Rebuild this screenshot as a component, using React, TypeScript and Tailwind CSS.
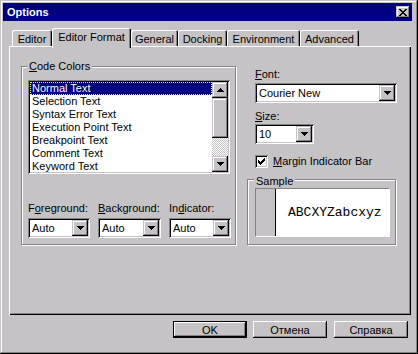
import React from 'react'

const raised =
  'shadow-[inset_-1px_-1px_#000,inset_1px_1px_#c6c3c6,inset_-2px_-2px_#848284,inset_2px_2px_#fff]'
const sunken =
  'shadow-[inset_1px_1px_#848284,inset_-1px_-1px_#fff,inset_2px_2px_#000,inset_-2px_-2px_#c6c3c6]'
const etched = 'border border-[#848284] shadow-[inset_1px_1px_#fff,1px_1px_#fff]'

function DownArrow() {
  return (
    <svg width="7" height="4" viewBox="0 0 7 4" shapeRendering="crispEdges">
      <path d="M0 0H7V1H6V2H5V3H4V4H3V3H2V2H1V1H0Z" fill="#000" />
    </svg>
  )
}

function UpArrow() {
  return (
    <svg width="7" height="4" viewBox="0 0 7 4" shapeRendering="crispEdges">
      <path d="M3 0H4V1H5V2H6V3H7V4H0V3H1V2H2V1H3Z" fill="#000" />
    </svg>
  )
}

function CloseGlyph() {
  const rows = [0, 1, 2, 3, 4, 5, 6]
  const rects: React.ReactNode[] = []
  rows.forEach((r) => {
    const d = r <= 3 ? r : 6 - r
    rects.push(<rect key={`a${r}`} x={d} y={r} width="2" height="1" />)
    rects.push(<rect key={`b${r}`} x={6 - d} y={r} width="2" height="1" />)
  })
  return (
    <svg width="8" height="7" viewBox="0 0 8 7" shapeRendering="crispEdges" fill="#000">
      {rects}
    </svg>
  )
}

function Check() {
  const tops = [2, 3, 4, 3, 2, 1, 0]
  return (
    <svg width="7" height="7" viewBox="0 0 7 7" shapeRendering="crispEdges" fill="#000">
      {tops.map((t, i) => (
        <rect key={i} x={i} y={t} width="1" height="3" />
      ))}
    </svg>
  )
}

function Combo({ value, width }: { value: string; width: string }) {
  return (
    <div className={`flex h-[20px] p-[2px] bg-white ${sunken} ${width}`}>
      <div className="flex-1 pl-[2px] leading-[16px] text-black">{value}</div>
      <div className={`w-[16px] h-[16px] bg-[#c6c3c6] flex items-center justify-center ${raised}`}>
        <DownArrow />
      </div>
    </div>
  )
}

const CODE_COLORS = [
  'Normal Text',
  'Selection Text',
  'Syntax Error Text',
  'Execution Point Text',
  'Breakpoint Text',
  'Comment Text',
  'Keyword Text',
]

const TABS = [
  { label: 'Editor', w: 'w-[40px]' },
  { label: 'Editor Format', w: 'w-[79px]', active: true },
  { label: 'General', w: 'w-[47px]' },
  { label: 'Docking', w: 'w-[49px]' },
  { label: 'Environment', w: 'w-[73px]' },
  { label: 'Advanced', w: 'w-[59px]' },
]

function Button({ children, primary }: { children: React.ReactNode; primary?: boolean }) {
  if (primary) {
    return (
      <div className="w-[74px] h-[17px] border border-black">
        <div className="h-full flex items-center justify-center pt-[1px] shadow-[inset_-1px_-1px_#000,inset_1px_1px_#fff,inset_-2px_-2px_#848284]">
          {children}
        </div>
      </div>
    )
  }
  return (
    <div className="w-[74px] h-[17px] flex items-center justify-center pt-[1px] shadow-[inset_-1px_-1px_#000,inset_1px_1px_#fff,inset_-2px_-2px_#848284]">
      {children}
    </div>
  )
}

export default function App() {
  return (
    <div
      className={`w-[418px] h-[354px] bg-[#c6c3c6] pt-[3px] pl-[3px] pr-[6px] flex flex-col text-[11px] leading-[13px] text-black font-['Liberation_Sans',Arial,sans-serif] ${raised}`}
    >
      {/* title bar */}
      <div className="h-[18px] bg-[#000080] flex items-center justify-between pl-[4px] pr-[2px]">
        <span className="text-white font-bold text-[11px]">Options</span>
        <div className={`w-[14px] h-[12px] bg-[#c6c3c6] flex items-center justify-center ${raised}`}>
          <CloseGlyph />
        </div>
      </div>

      {/* tabs */}
      <div className="relative z-10 mt-[7px] ml-[9px] h-[20px] -mb-[2px] flex items-end">
        {TABS.map((t) =>
          t.active ? (
            <div
              key={t.label}
              className={`${t.w} h-[20px] bg-[#c6c3c6] rounded-t-[2px] flex justify-center pt-[3px] shadow-[inset_1px_1px_#fff,inset_-1px_0_#000,inset_-2px_0_#848284]`}
            >
              {t.label}
            </div>
          ) : (
            <div
              key={t.label}
              className={`${t.w} h-[16px] mb-[2px] rounded-t-[2px] flex justify-center pt-[3px] shadow-[inset_1px_1px_#fff,inset_-1px_0_#000,inset_-2px_0_#848284]`}
            >
              {t.label}
            </div>
          )
        )}
      </div>

      {/* tab panel */}
      <div className="ml-[6px] mr-[1px] h-[269px] pl-[12px] pt-[14px] flex items-start shadow-[inset_1px_1px_#fff,inset_-1px_-1px_#000,inset_-2px_-2px_#848284]">
        {/* Code Colors group */}
        <div className={`mt-[6px] w-[215px] h-[179px] ${etched}`}>
          <div className="-mt-[7px] ml-[5px] px-[2px] w-fit bg-[#c6c3c6]">
            <u>C</u>ode Colors
          </div>
          <div className={`mt-[7px] ml-[6px] w-[202px] h-[94px] bg-white p-[2px] flex ${sunken}`}>
            <div className="flex-1">
              {CODE_COLORS.map((c, i) => (
                <div
                  key={c}
                  className={
                    i === 0
                      ? 'h-[13px] pl-[2px] bg-[#000080] text-white outline-1 outline-dotted outline-[#f0f080] -outline-offset-1'
                      : 'h-[13px] pl-[2px]'
                  }
                >
                  {c}
                </div>
              ))}
            </div>
            <div className="w-[16px] flex flex-col">
              <div className={`h-[16px] bg-[#c6c3c6] flex items-center justify-center ${raised}`}>
                <UpArrow />
              </div>
              <div className={`h-[40px] bg-[#c6c3c6] ${raised}`} />
              <div className="flex-1 bg-[repeating-conic-gradient(#fff_0_25%,#c6c3c6_0_50%)] bg-[length:2px_2px]" />
              <div className={`h-[16px] bg-[#c6c3c6] flex items-center justify-center ${raised}`}>
                <DownArrow />
              </div>
            </div>
          </div>
          <div className="mt-[28px] ml-[6px] flex gap-[8px]">
            <div>
              <div>
                F<u>o</u>reground:
              </div>
              <div className="mt-[3px]">
                <Combo value="Auto" width="w-[62px]" />
              </div>
            </div>
            <div>
              <div>
                <u>B</u>ackground:
              </div>
              <div className="mt-[3px]">
                <Combo value="Auto" width="w-[63px]" />
              </div>
            </div>
            <div>
              <div>
                In<u>d</u>icator:
              </div>
              <div className="mt-[3px]">
                <Combo value="Auto" width="w-[62px]" />
              </div>
            </div>
          </div>
        </div>

        {/* right column */}
        <div className="ml-[19px] w-[142px] flex flex-col">
          <div className="mt-[8px]">
            <u>F</u>ont:
          </div>
          <div className="mt-[2px]">
            <Combo value="Courier New" width="w-[142px]" />
          </div>
          <div className="mt-[7px]">
            <u>S</u>ize:
          </div>
          <div className="mt-[1px]">
            <Combo value="10" width="w-[59px]" />
          </div>
          <div className="mt-[11px] flex items-center h-[13px]">
            <div className={`w-[13px] h-[13px] bg-white flex items-center justify-center ${sunken}`}>
              <Check />
            </div>
            <span className="ml-[5px]">
              <u>M</u>argin Indicator Bar
            </span>
          </div>
          <div className={`mt-[11px] -ml-[8px] w-[149px] h-[66px] ${etched}`}>
            <div className="-mt-[5px] ml-[6px] px-[2px] w-fit bg-[#c6c3c6]">Sample</div>
            <div className="ml-[7px] w-[135px] h-[49px] flex border border-t-[#848284] border-l-[#848284] border-b-white border-r-white">
              <div className="w-[20px] border-r border-black bg-[#c6c3c6]" />
              <div className="flex-1 bg-white flex items-center pl-[12px] text-[13px] font-['Liberation_Mono','Courier_New',monospace]">
                ABCXYZabcxyz
              </div>
            </div>
          </div>
        </div>
      </div>

      {/* buttons */}
      <div className="mt-[6px] mr-[4px] flex justify-end">
        <Button primary>OK</Button>
        <div className="ml-[6px]">
          <Button>Отмена</Button>
        </div>
        <div className="ml-[7px]">
          <Button>Справка</Button>
        </div>
      </div>
    </div>
  )
}
